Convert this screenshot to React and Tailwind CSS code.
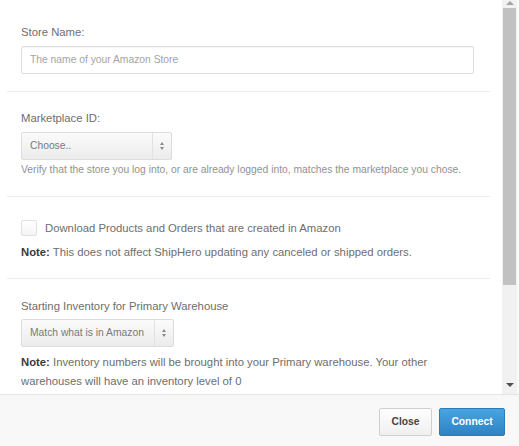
import React from "react";

function SelectBox({ label, width, split }) {
  return (
    <div
      className="flex h-[28px] items-stretch rounded-[2px] border border-[#dcdcdc] bg-gradient-to-b from-[#fbfbfb] to-[#ececec] text-[10.3px] text-[#7a7a7a]"
      style={{ width }}
    >
      <div className="flex items-center pl-[8px]" style={{ width: split }}>
        {label}
      </div>
      <div className="flex flex-1 flex-col items-center justify-center gap-[2px] border-l border-[#e2e2e2]">
        <span className="h-0 w-0 border-x-[2.5px] border-b-[3px] border-x-transparent border-b-[#8a8a8a]" />
        <span className="h-0 w-0 border-x-[2.5px] border-t-[3px] border-x-transparent border-t-[#8a8a8a]" />
      </div>
    </div>
  );
}

function Note({ children }) {
  return (
    <p>
      <b className="font-bold text-[#3a3a3a]">Note:</b> {children}
    </p>
  );
}

export default function App() {
  return (
    <div
      className="flex h-[446px] w-[519px] flex-col overflow-hidden bg-white text-[#6e6e6e]"
      style={{ fontFamily: '"Liberation Sans", Arial, sans-serif' }}
    >
      <div className="flex h-[394px] overflow-hidden">
        <div className="w-[502px] pl-[7px] pr-[12px]">
          <div className="pb-[17px] pl-[14px] pr-[16px] pt-[24px]">
            <div className="text-[11.3px] leading-[16px]">Store Name:</div>
            <div className="mt-[6px] flex h-[28px] items-center rounded-[2px] border border-[#dedede] pl-[8px] text-[10.3px] text-[#a4a4a4] shadow-[inset_0_1px_1px_rgba(0,0,0,0.04)]">
              The name of your Amazon Store
            </div>
          </div>

          <div className="border-t border-[#ececec] pb-[19px] pl-[14px] pt-[18px]">
            <div className="text-[11.3px] leading-[16px]">Marketplace ID:</div>
            <div className="mt-[6px]">
              <SelectBox label="Choose.." width={151} split={130} />
            </div>
            <div className="mt-[3px] text-[10.3px] leading-[14px] text-[#929292]">
              Verify that the store you log into, or are already logged into,
              matches the marketplace you chose.
            </div>
          </div>

          <div className="border-t border-[#ececec] pb-[18px] pl-[14px] pt-[23px]">
            <div className="flex h-[16px] items-center text-[11.3px]">
              <span className="mr-[8px] h-[16px] w-[16px] rounded-[2px] border border-[#e0e0e0] bg-gradient-to-b from-white to-[#f4f4f4]" />
              Download Products and Orders that are created in Amazon
            </div>
            <div className="mt-[8px] text-[11.3px] leading-[16px]">
              <Note>
                This does not affect ShipHero updating any canceled or shipped
                orders.
              </Note>
            </div>
          </div>

          <div className="border-t border-[#ececec] pl-[14px] pt-[19px]">
            <div className="text-[11.3px] leading-[16px]">
              Starting Inventory for Primary Warehouse
            </div>
            <div className="mt-[5px]">
              <SelectBox label="Match what is in Amazon" width={153} split={132} />
            </div>
            <div className="mt-[6px] text-[11.3px] leading-[19px]">
              <Note>
                Inventory numbers will be brought into your Primary warehouse.
                Your other warehouses will have an inventory level of 0
              </Note>
            </div>
          </div>
        </div>

        <div className="flex w-[15px] flex-col items-center bg-[#f1f1f1]">
          <span className="mt-[1px] h-0 w-0 border-x-[4px] border-b-[4px] border-x-transparent border-b-[#a3a3a3]" />
          <div className="mt-[3px] h-[277px] w-[13px] bg-[#c1c1c1]" />
          <div className="flex-1" />
          <span className="mb-[7px] h-0 w-0 border-x-[4px] border-t-[4px] border-x-transparent border-t-[#505050]" />
        </div>
        <div className="flex-1 bg-[#fafafa]" />
      </div>

      <div className="flex flex-1 justify-end gap-[7px] border-t border-[#e5e5e5] bg-[#f8f8f8] pr-[14px] pt-[13px]">
        <button className="h-[28px] w-[53px] rounded-[2px] border border-[#cfcfcf] bg-gradient-to-b from-white to-[#efefef] text-[10.3px] font-bold text-[#444]">
          Close
        </button>
        <button className="h-[28px] w-[66px] rounded-[2px] border border-[#2b7bbb] bg-gradient-to-b from-[#48a5e0] to-[#2e82c4] text-[10.3px] font-bold text-white">
          Connect
        </button>
      </div>
    </div>
  );
}
